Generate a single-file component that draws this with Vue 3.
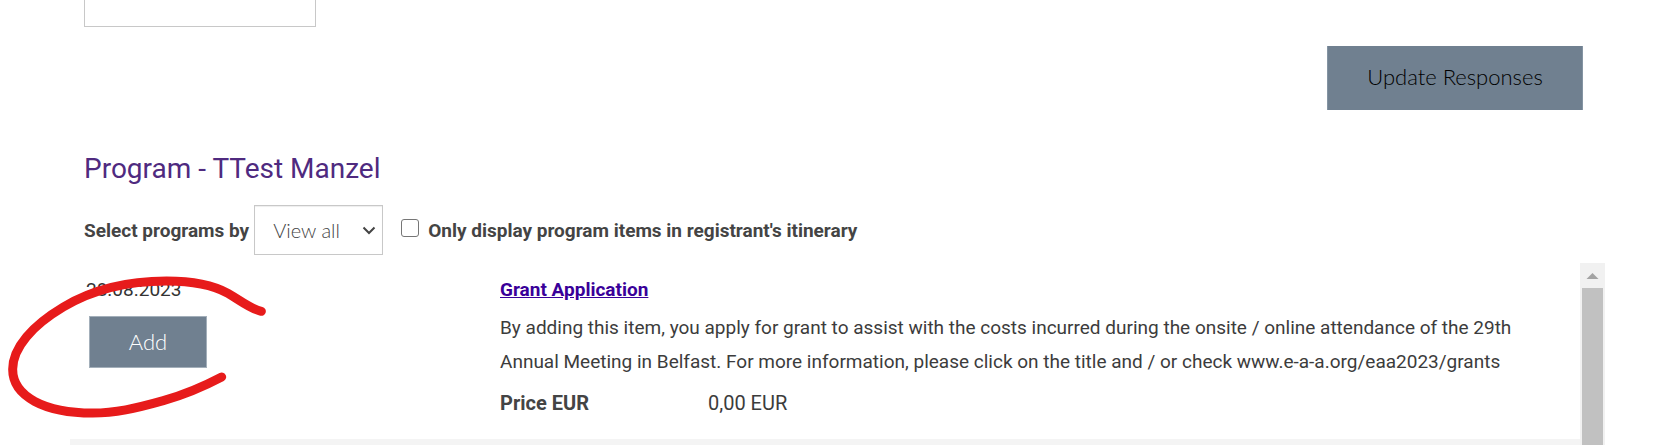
<script setup>
import { ref } from 'vue'

const answer = ref('')
const view = ref('all')
const onlyItinerary = ref(false)
</script>

<template>
  <main class="page">
    <textarea v-model="answer" class="answer" aria-label="Response"></textarea>
    <div class="actions">
      <button type="button" class="btn update">Update Responses</button>
    </div>

    <h2 class="title">Program - TTest Manzel</h2>

    <div class="filters">
      <label for="view">Select programs by</label>
      <div class="select-wrap">
        <select id="view" v-model="view">
          <option value="all">View all</option>
        </select>
        <svg class="chevron" viewBox="0 0 14 9" aria-hidden="true">
          <path d="M1.5 1.5 L7 7 L12.5 1.5" />
        </svg>
      </div>
      <input id="only" v-model="onlyItinerary" type="checkbox" />
      <label for="only">Only display program items in registrant's itinerary</label>
    </div>

    <section class="list">
      <div class="rows">
        <article class="row">
          <div class="when">
            <div class="date">28.08.2023</div>
            <button type="button" class="btn add">Add</button>
            <svg class="mark" viewBox="0 0 900 570" aria-hidden="true">
              <path d="M784 169 C748 160 722 137 684 115 C635 88 575 78 500 78 C385 78 285 99 190 156 C98 211 38 277 38 343 C38 425 135 474 278 474 C345 474 405 461 490 437 C550 420 608 396 665 366" />
            </svg>
          </div>
          <div class="info">
            <a href="#grant">Grant Application</a>
            <p>By adding this item, you apply for grant to assist with the costs incurred during the onsite / online attendance of the 29th Annual Meeting in Belfast. For more information, please click on the title and / or check www.e-a-a.org/eaa2023/grants</p>
            <dl>
              <dt>Price EUR</dt>
              <dd>0,00 EUR</dd>
            </dl>
          </div>
        </article>
      </div>
      <div class="scrollbar" aria-hidden="true">
        <svg viewBox="0 0 25 25"><path d="M12.5 10 L18.5 16 L6.5 16 Z" /></svg>
        <div class="thumb"></div>
      </div>
    </section>
  </main>
</template>

<style>
body {
  margin: 0;
  background: #fff;
}
</style>

<style scoped>
.page {
  box-sizing: border-box;
  height: 100vh;
  display: flex;
  flex-direction: column;
  padding: 0 54px 0 70px;
  overflow: hidden;
  font-family: Roboto, sans-serif;
  font-size: 19px;
  color: #444;
}
.answer {
  box-sizing: border-box;
  flex: none;
  width: 232px;
  height: 27px;
  margin-left: 14px;
  border: 1px solid #c8c8c8;
  border-top: 0;
  resize: none;
  background: #fff;
}
.actions {
  display: flex;
  justify-content: flex-end;
  padding: 19px 22px 0 0;
}
.btn {
  box-sizing: border-box;
  border: 1px solid #8494a3;
  background: #708090;
  font-family: Lato, sans-serif;
  font-size: 22px;
  font-weight: 300;
  padding: 0 0 2px;
}
.update {
  width: 256px;
  height: 64px;
  border-width: 0 1px;
  padding-bottom: 4px;
  color: #000;
}
.title {
  margin: 43px 0 0 14px;
  font-size: 28px;
  line-height: 32px;
  font-weight: 400;
  color: #4f2a7f;
}
.filters {
  display: flex;
  align-items: center;
  margin: 20px 0 0 14px;
  font-weight: 700;
}
.select-wrap {
  position: relative;
  margin: 0 18px 0 5px;
}
select {
  box-sizing: border-box;
  display: block;
  width: 129px;
  height: 50px;
  padding: 0 18px;
  appearance: none;
  border: 1px solid #c8c8c8;
  border-radius: 0;
  background: #fff;
  box-shadow: inset 0 1px 1px #eee;
  font-family: Lato, sans-serif;
  font-size: 20px;
  font-weight: 300;
  color: #444;
}
.chevron {
  position: absolute;
  right: 7px;
  top: 21px;
  width: 14px;
  height: 9px;
  fill: none;
  stroke: #444;
  stroke-width: 2;
  pointer-events: none;
}
input[type='checkbox'] {
  appearance: none;
  box-sizing: border-box;
  width: 18px;
  height: 18px;
  margin: 0 9px 4px 0;
  border: 1px solid #767676;
  border-radius: 3px;
  background: #fff;
}
.list {
  flex: 1;
  min-height: 0;
  display: flex;
  margin-top: 8px;
}
.rows {
  flex: 1;
  background: #f4f4f4;
}
.row {
  position: relative;
  display: flex;
  height: 176px;
  background: #fff;
}
.when {
  box-sizing: border-box;
  width: 430px;
  padding: 16px 0 0 16px;
}
.date {
  line-height: 22px;
  color: #333;
}
.add {
  display: block;
  width: 118px;
  height: 52px;
  margin: 15px 0 0 3px;
  border-color: #a3afba;
  color: #fff;
}
.mark {
  position: absolute;
  left: -70px;
  top: -8px;
  width: 300px;
  height: 190px;
  fill: none;
  stroke: #e71b1b;
  stroke-width: 27;
  stroke-linecap: round;
  pointer-events: none;
}
.info {
  flex: 1;
  padding: 15px 50px 0 0;
}
a {
  display: inline-block;
  line-height: 22px;
  font-weight: 700;
  color: #390099;
}
p {
  margin: 10px 0 0;
  line-height: 34px;
  color: #3c3c3c;
}
dl {
  display: flex;
  margin: 13px 0 0;
  font-size: 20px;
  line-height: 22px;
}
dt {
  width: 208px;
  font-weight: 700;
}
dd {
  margin: 0;
  color: #3c3c3c;
}
.scrollbar {
  display: flex;
  flex-direction: column;
  width: 25px;
  background: #f1f1f1;
}
.scrollbar svg {
  width: 25px;
  height: 25px;
  flex: none;
  fill: #a3a3a3;
}
.thumb {
  flex: 1;
  margin: 0 2px;
  background: #c1c1c1;
}
</style>
